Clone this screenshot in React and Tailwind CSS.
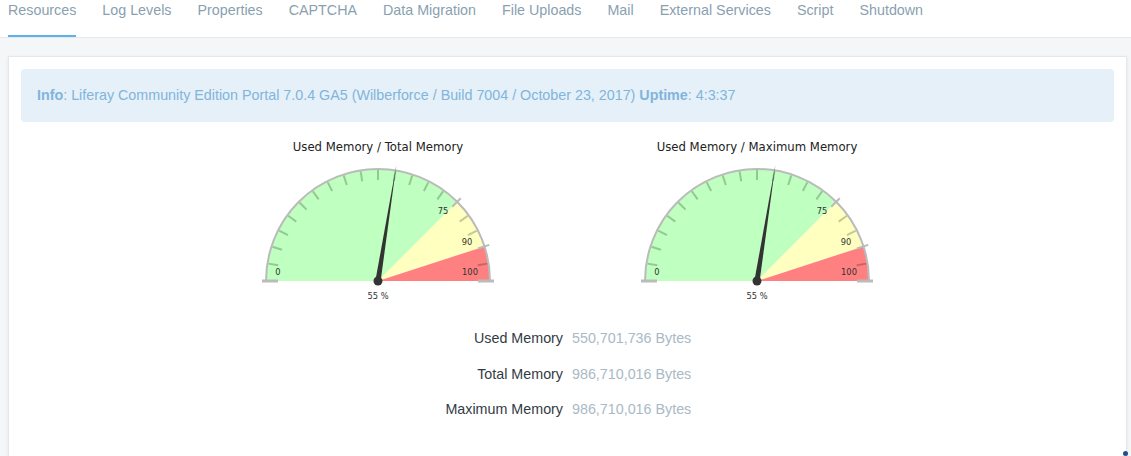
import React from 'react';

const tabs = ['Resources', 'Log Levels', 'Properties', 'CAPTCHA', 'Data Migration', 'File Uploads', 'Mail', 'External Services', 'Script', 'Shutdown'];

const stats = [
  ['Used Memory', '550,701,736 Bytes'],
  ['Total Memory', '986,710,016 Bytes'],
  ['Maximum Memory', '986,710,016 Bytes'],
];

function Gauge({ title, value }) {
  const cx = 130;
  const cy = 146;
  const r = 112;

  const pt = (v, rad) => {
    const a = Math.PI - (v / 100) * Math.PI;
    return [cx + rad * Math.cos(a), cy - rad * Math.sin(a)];
  };

  const wedge = (from, to) => {
    const [x1, y1] = pt(from, r);
    const [x2, y2] = pt(to, r);
    return `M${cx} ${cy} L${x1} ${y1} A${r} ${r} 0 0 1 ${x2} ${y2} Z`;
  };

  const ticks = [];
  for (let v = 5; v < 100; v += 5) {
    if (v === 75 || v === 90) continue;
    const [x1, y1] = pt(v, r - 11);
    const [x2, y2] = pt(v, r - 1);
    ticks.push(<line key={v} x1={x1} y1={y1} x2={x2} y2={y2} stroke="#000" strokeOpacity="0.22" strokeWidth="2" />);
  }

  const [sx, sy] = pt(0, r);
  const [ex, ey] = pt(100, r);

  // needle
  const a = Math.PI - (value / 100) * Math.PI;
  const tip = [cx + 118 * Math.cos(a), cy - 118 * Math.sin(a)];
  const px = Math.sin(a) * 2.6;
  const py = Math.cos(a) * 2.6;

  return (
    <svg width="260" height="168" viewBox="0 0 260 168" style={{ fontFamily: '"DejaVu Sans", sans-serif' }}>
      <text x={cx} y="16" textAnchor="middle" fontSize="11.7" fill="#222">{title}</text>

      <path d={wedge(0, 75)} fill="#bfffbf" />
      <path d={wedge(75, 90)} fill="#ffffbf" />
      <path d={wedge(90, 100)} fill="#ff8080" />

      {ticks}

      <path d={`M${sx} ${sy} A${r} ${r} 0 0 1 ${ex} ${ey}`} fill="none" stroke="#bbb" strokeWidth="2" />

      {[75, 90].map((v) => {
        const [x1, y1] = pt(v, r - 7);
        const [x2, y2] = pt(v, r + 5);
        return <line key={v} x1={x1} y1={y1} x2={x2} y2={y2} stroke="#bbb" strokeWidth="2" />;
      })}

      <line x1={cx - 116} y1={cy} x2={cx - 100} y2={cy} stroke="#bbb" strokeWidth="3" />
      <line x1={cx + 100} y1={cy} x2={cx + 116} y2={cy} stroke="#bbb" strokeWidth="3" />

      <g fontSize="8.3" fill="#333" textAnchor="middle">
        <text x={cx - 100} y={cy - 6}>0</text>
        <text x={cx + 65} y={cy - 67}>75</text>
        <text x={cx + 89} y={cy - 36}>90</text>
        <text x={cx + 92} y={cy - 6}>100</text>
        <text x={cx} y={cy + 18}>{value} %</text>
      </g>

      <polygon points={`${cx - px},${cy - py} ${tip[0]},${tip[1]} ${cx + px},${cy + py}`} fill="#333" />
      <circle cx={cx} cy={cy} r="4.5" fill="#333" />
    </svg>
  );
}

export default function App() {
  return (
    <div className="relative min-h-[456px] bg-[#f5f6f8] overflow-hidden" style={{ fontFamily: '"Liberation Sans", Arial, sans-serif' }}>
      <nav className="h-[38px] bg-white border-b border-[#e4e7ec] flex gap-[26px] pl-2">
        {tabs.map((t, i) => (
          <div
            key={t}
            className={`pt-[2px] h-[37px] text-[14.3px] leading-[17px] text-[#8a9fb0] ${i === 0 ? 'border-b-2 border-[#5eb2ea]' : ''}`}
          >
            {t}
          </div>
        ))}
      </nav>

      <div className="mt-[18px] mx-2 mr-[4px] bg-white border border-[#e5e7eb] shadow-[0_1px_3px_rgba(0,0,0,0.08)] p-3 h-[430px]">
        <div className="h-[53px] flex items-center px-4 bg-[#e6f0f8] rounded text-[14.3px] text-[#80b5dc]">
          <span>
            <b>Info</b>: Liferay Community Edition Portal 7.0.4 GA5 (Wilberforce / Build 7004 / October 23, 2017) <b>Uptime</b>: 4:3:37
          </span>
        </div>

        <div className="mt-[13px] flex justify-center gap-[119px]">
          <Gauge title="Used Memory / Total Memory" value={55} />
          <Gauge title="Used Memory / Maximum Memory" value={55} />
        </div>

        <div className="mt-[25px] grid grid-cols-2 gap-x-[9px] gap-y-[15.5px] text-[14.3px] leading-5">
          {stats.map(([label, val]) => (
            <React.Fragment key={label}>
              <div className="text-right text-[#333b45]">{label}</div>
              <div className="text-[#a9b9c6]">{val}</div>
            </React.Fragment>
          ))}
        </div>
      </div>

      <div className="absolute right-[3px] top-[451px] w-[5px] h-[5px] rounded-full bg-[#1f4e8c]" />
    </div>
  );
}
